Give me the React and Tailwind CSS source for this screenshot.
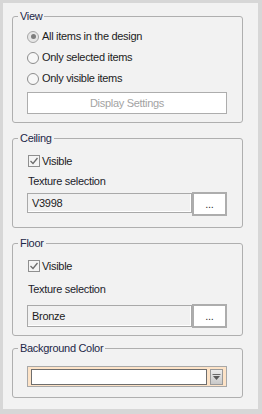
import React from "react";

function Radio({ checked, label }) {
  return (
    <div className="flex items-center h-[21px] gap-[3px]">
      <div
        className={
          "w-[12px] h-[12px] rounded-full border flex items-center justify-center " +
          (checked ? "border-[#a6a6a6] bg-[#e6e6e6]" : "border-[#8c8c8c] bg-[#f7f7f7]")
        }
      >
        {checked && <div className="w-[5px] h-[5px] rounded-full bg-[#7d7d7d]" />}
      </div>
      <span className="text-[#1c1c1c]">{label}</span>
    </div>
  );
}

function Checkbox({ label }) {
  return (
    <div className="flex items-center gap-[2px] pl-[15px] h-[20px]">
      <div className="w-[12px] h-[12px] border border-[#8f8f8f] bg-[#f4f4f4] flex items-center justify-center">
        <svg width="10" height="10" viewBox="0 0 10 10">
          <path d="M1.5 5 L4 7.5 L8.5 2" fill="none" stroke="#6c6c6c" strokeWidth="1.3" />
        </svg>
      </div>
      <span className="text-[#1c1c1c]">{label}</span>
    </div>
  );
}

function TextureRow({ value, inputH, inputMt }) {
  return (
    <div className="flex items-start pl-[14px]">
      <div
        className={
          "w-[165px] border border-[#a9a9a9] bg-[#f1f1f1] shadow-[inset_-1px_-1px_0_#ffffff] flex items-center pl-[4px] text-[#1c1c1c] " +
          inputH +
          " " +
          inputMt
        }
      >
        {value}
      </div>
      <div className="w-[35px] h-[24px] border-2 border-[#adadad] bg-white flex items-center justify-center text-[#333] leading-none">
        ...
      </div>
    </div>
  );
}

function Group({ title, className, children }) {
  return (
    <fieldset className={"w-[231px] border border-[#afafaf] rounded-[3px] " + className}>
      <legend className="ml-[5px] px-[2px] leading-[14px] text-[#1d2748]">{title}</legend>
      {children}
    </fieldset>
  );
}

export default function App() {
  return (
    <div className="w-[262px] h-[414px] bg-[#d7d7d7] pt-[3px] pl-[3px] pr-[4px] pb-[5px] font-['Liberation_Sans',Arial,sans-serif] text-[11px] tracking-[-0.3px]">
      <div className="w-full h-full bg-[#f2f2f2] pt-[6px] pl-[9px] flex flex-col">
        <Group title="View" className="pb-[8px]">
          <div className="pl-[14px] pr-[15px]">
            <div className="pt-[3px]">
              <Radio checked label="All items in the design" />
              <Radio label="Only selected items" />
              <Radio label="Only visible items" />
            </div>
            <div className="mt-[3px] w-[200px] h-[22px] border border-[#adadad] bg-white flex items-center justify-center text-[#a3a3a3]">
              Display Settings
            </div>
          </div>
        </Group>

        <Group title="Ceiling" className="mt-[8px] pb-[11px]">
          <div className="pt-[6px]">
            <Checkbox label="Visible" />
          </div>
          <div className="h-[21px] flex items-center pl-[15px] text-[#1c1c2c]">Texture selection</div>
          <TextureRow value="V3998" inputH="h-[20px]" inputMt="mt-[1px]" />
        </Group>

        <Group title="Floor" className="mt-[8px] pb-[7px]">
          <div className="pt-[6px]">
            <Checkbox label="Visible" />
          </div>
          <div className="mt-[3px] h-[21px] flex items-center pl-[15px] text-[#1c1c2c]">Texture selection</div>
          <div className="mt-[4px]">
            <TextureRow value="Bronze" inputH="h-[22px]" inputMt="mt-[1px]" />
          </div>
        </Group>

        <Group title="Background Color" className="mt-[5px] pb-[10px]">
          <div className="pl-[14px] pt-[11px]">
            <div className="w-[200px] h-[21px] border border-[#a8a8a8] bg-[#fde3c7] flex items-center px-[3px] gap-[3px]">
              <div className="w-[176px] h-[16px] border border-[#6e6e6e] bg-white" />
              <div className="w-[13px] h-[16px] border border-[#9a9a9a] bg-gradient-to-b from-[#ececec] to-[#c9c9c9] flex items-center justify-center">
                <svg width="9" height="8" viewBox="0 0 9 8">
                  <rect x="0.5" y="1" width="8" height="1" fill="#6a6a6a" />
                  <path d="M1 3 L8 3 L4.5 7 Z" fill="#5a5a5a" />
                </svg>
              </div>
            </div>
          </div>
        </Group>
      </div>
    </div>
  );
}
